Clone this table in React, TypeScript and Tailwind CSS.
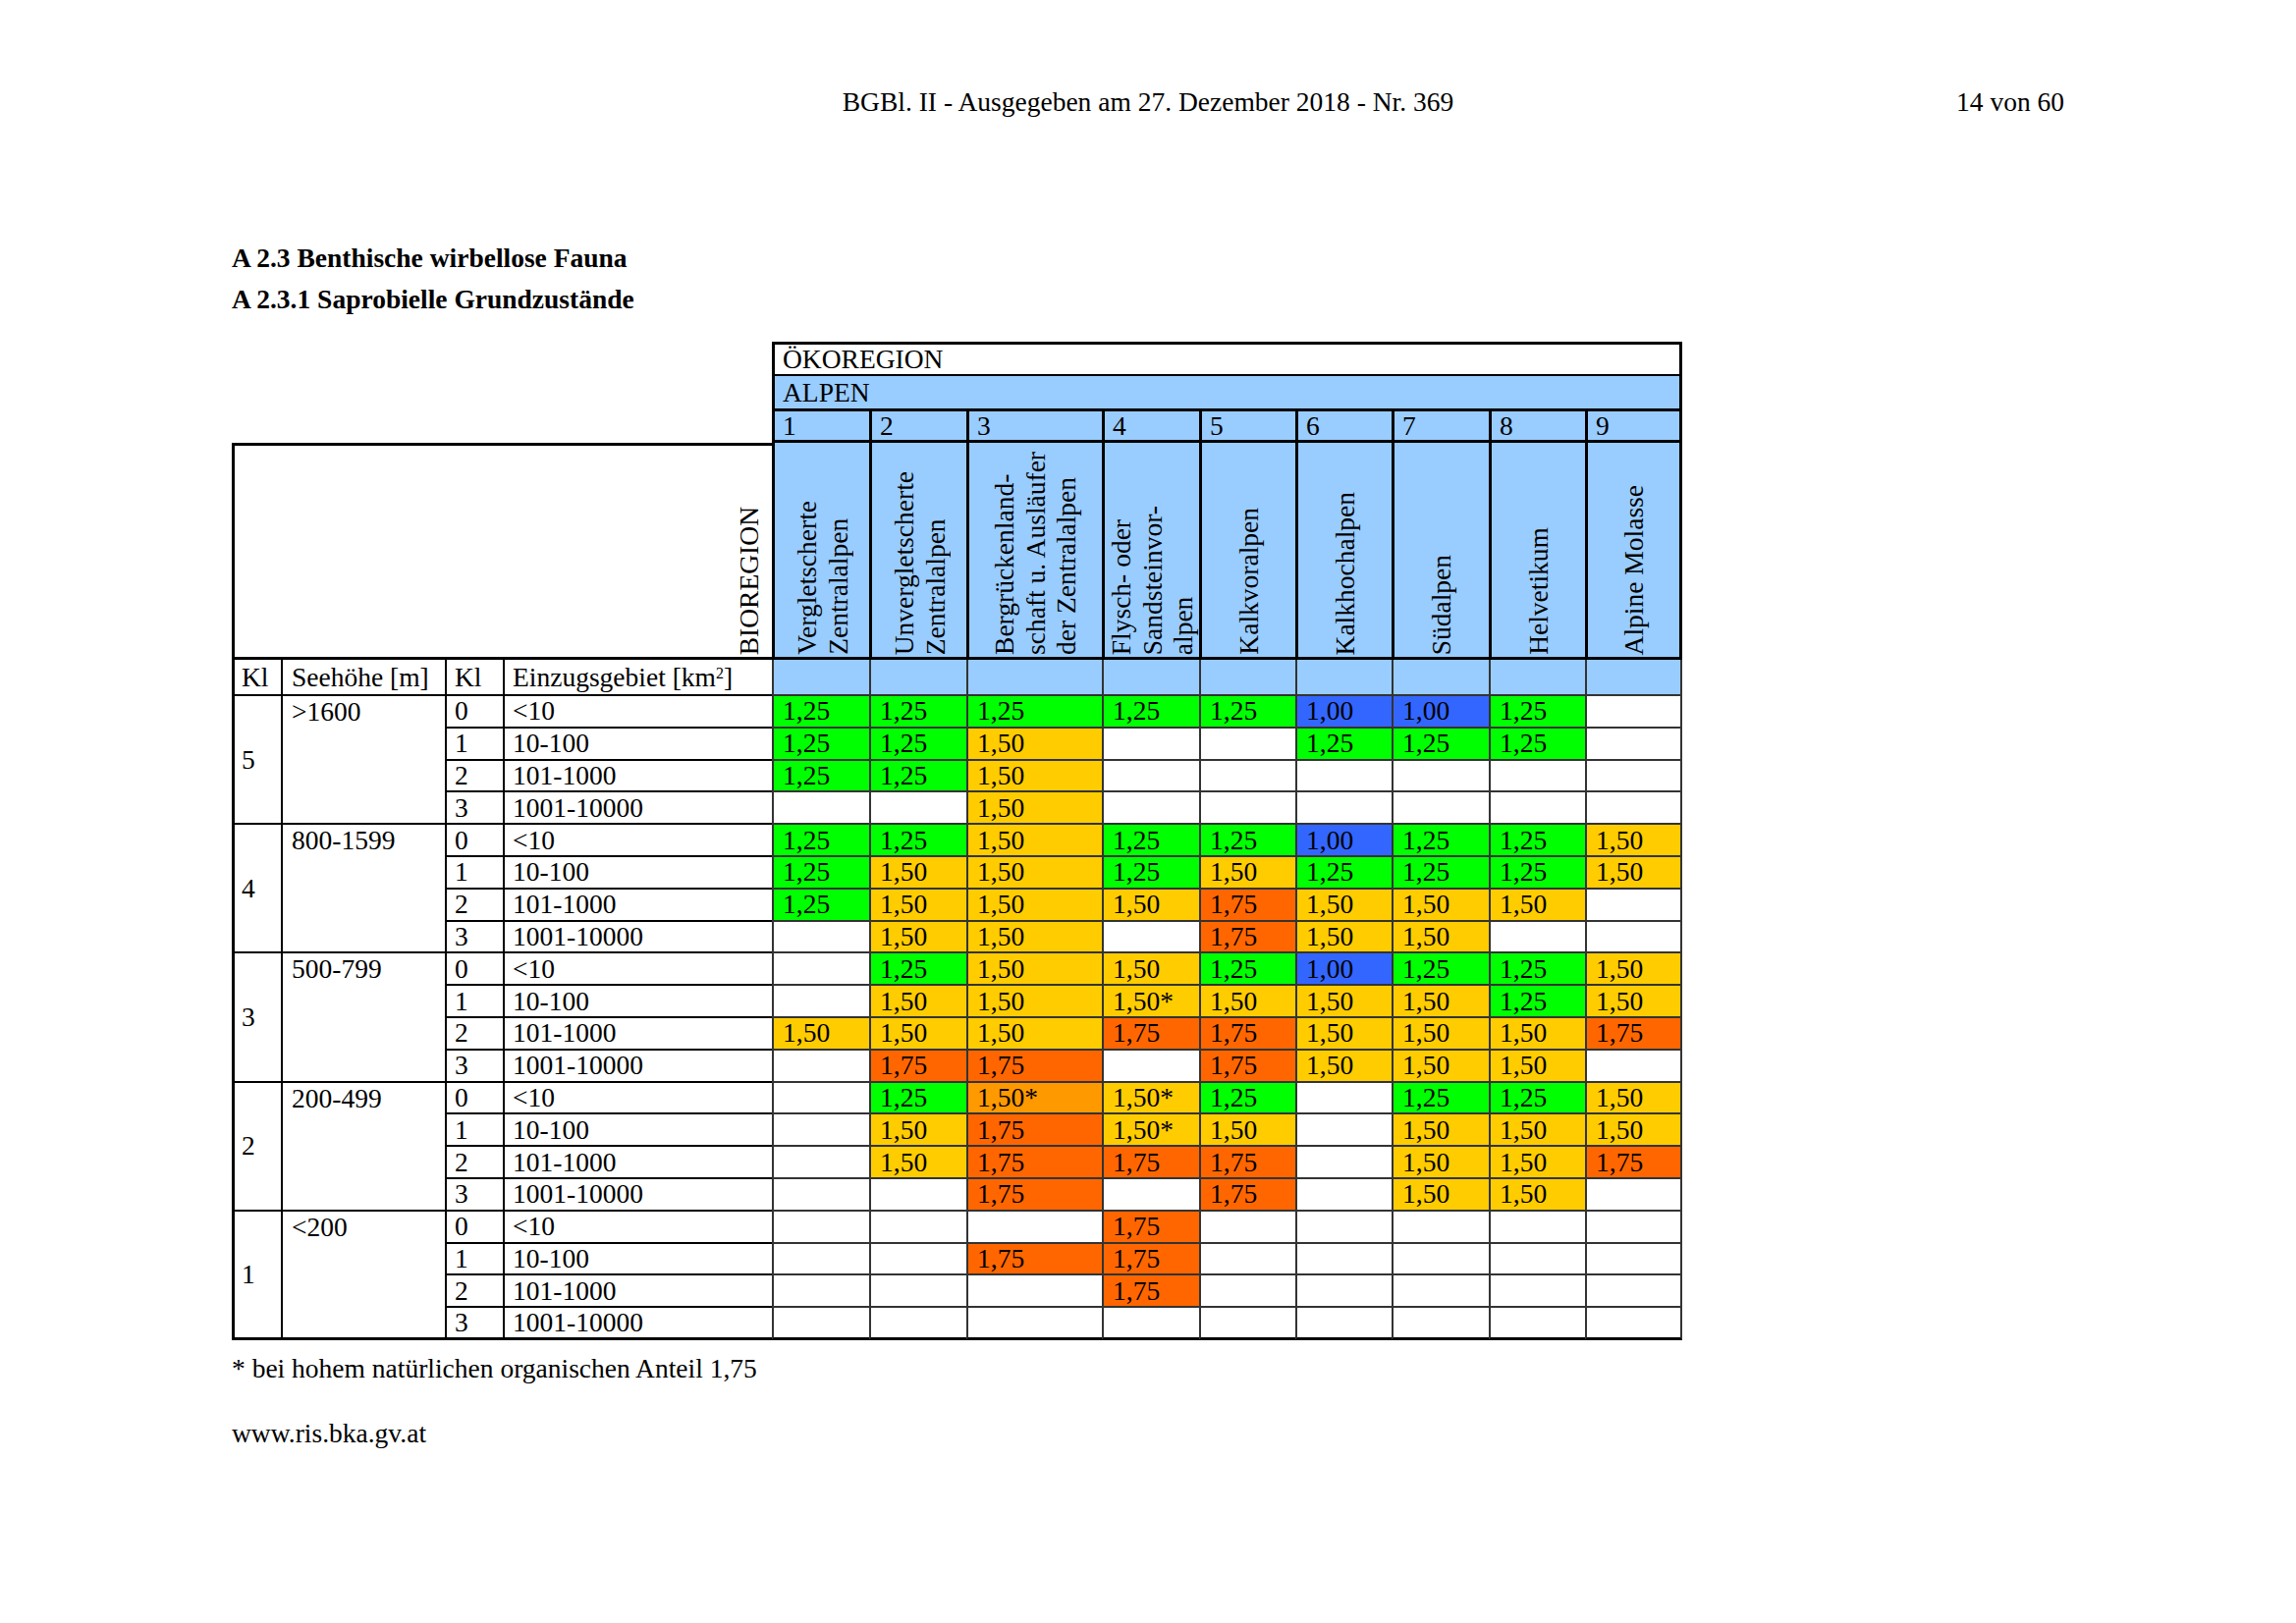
const serif = "font-['Liberation_Serif','Times_New_Roman',serif]";

// code letter -> [shown value, cell colour]
const values: Record<string, [string, string]> = {
  G: ['1,25', 'bg-[#00ff00]'],
  B: ['1,00', 'bg-[#3366ff]'],
  Y: ['1,50', 'bg-[#ffcc00]'],
  S: ['1,50*', 'bg-[#ffcc00]'],
  A: ['1,50*', 'bg-[#ff9900]'],
  O: ['1,75', 'bg-[#ff6600]'],
};

const groups = [
  { kl: '5', height: '>1600', rows: ['GGGGGBBG.', 'GGY..GGG.', 'GGY......', '..Y......'] },
  { kl: '4', height: '800-1599', rows: ['GGYGGBGGY', 'GYYGYGGGY', 'GYYYOYYY.', '.YY.OYY..'] },
  { kl: '3', height: '500-799', rows: ['.GYYGBGGY', '.YYSYYYGY', 'YYYOOYYYO', '.OO.OYYY.'] },
  { kl: '2', height: '200-499', rows: ['.GASG.GGY', '.YOSY.YYY', '.YOOO.YYO', '..O.O.YY.'] },
  { kl: '1', height: '<200', rows: ['...O.....', '..OO.....', '...O.....', '.........'] },
];

const areas = ['<10', '10-100', '101-1000', '1001-10000'];

const regions = [
  ['Vergletscherte', 'Zentralalpen'],
  ['Unvergletscherte', 'Zentralalpen'],
  ['Bergrückenland-', 'schaft u. Ausläufer', 'der Zentralalpen'],
  ['Flysch- oder', 'Sandsteinvor-', 'alpen'],
  ['Kalkvoralpen'],
  ['Kalkhochalpen'],
  ['Südalpen'],
  ['Helvetikum'],
  ['Alpine Molasse'],
];

function Vertical({ lines }: { lines: string[] }) {
  return (
    <div className="[writing-mode:vertical-rl] rotate-180 whitespace-nowrap leading-[31.5px]">
      {lines.map((l, i) => (
        <div key={i}>{l}</div>
      ))}
    </div>
  );
}

function GrundTable() {
  return (
    <div className="grid grid-cols-[50px_167px_59px_274px_99px_99px_138px_99px_98px_98px_99px_98px_99px] grid-rows-[35px_36px_32px_221px_37px_repeat(20,32.8px)] leading-[30px]">
      <div className="col-span-4 row-span-3" />
      <div className="col-span-9 flex items-center border-t-[3px] border-x-[3px] border-b-2 border-black bg-white pl-[8px]">
        ÖKOREGION
      </div>
      <div className="col-span-9 flex items-center border-x-[3px] border-b-[3px] border-black bg-[#99ccff] pl-[8px]">
        ALPEN
      </div>
      {regions.map((_, i) => (
        <div
          key={i}
          className={`flex items-center border-l-[3px] border-b-[3px] border-black bg-[#99ccff] pl-[8px] ${i === 8 ? 'border-r-[3px]' : ''}`}
        >
          {i + 1}
        </div>
      ))}

      <div className="col-span-4 flex items-end justify-end border-t-[3px] border-l-[3px] border-b-[3px] border-black pr-[8px] pb-[2px]">
        <Vertical lines={['BIOREGION']} />
      </div>
      {regions.map((lines, i) => (
        <div
          key={i}
          className={`flex items-end justify-center border-l-[3px] border-b-[3px] border-black bg-[#99ccff] pb-[2px] ${i === 8 ? 'border-r-[3px]' : ''}`}
        >
          <Vertical lines={lines} />
        </div>
      ))}

      <div className="flex items-center border-l-[3px] border-b-2 border-black pl-[7px]">Kl</div>
      <div className="flex items-center border-l-2 border-b-2 border-black pl-[9px]">Seehöhe [m]</div>
      <div className="flex items-center border-l-2 border-b-2 border-black pl-[8px]">Kl</div>
      <div className="flex items-center border-l-2 border-b-2 border-black pl-[8px]">
        <span>
          Einzugsgebiet [km<sup className="text-[16px]">2</sup>]
        </span>
      </div>
      {regions.map((_, i) => (
        <div
          key={i}
          className={`border-l-2 border-b-2 border-[#333] bg-[#99ccff] ${i === 8 ? 'border-r-2' : ''}`}
        />
      ))}

      {groups.map((g, gi) => {
        const last = gi === groups.length - 1;
        return [
          <div
            key={`kl${gi}`}
            className={`row-span-4 flex items-center border-l-[3px] border-black pl-[7px] ${last ? 'border-b-[3px]' : 'border-b-2'}`}
          >
            {g.kl}
          </div>,
          <div
            key={`h${gi}`}
            className={`row-span-4 border-l-2 border-black pl-[9px] pt-[1px] ${last ? 'border-b-[3px]' : 'border-b-2'}`}
          >
            {g.height}
          </div>,
          ...g.rows.flatMap((row, ri) => {
            const bottom = last && ri === 3;
            return [
              <div
                key={`k${gi}-${ri}`}
                className={`flex items-center border-l-2 border-black pl-[8px] ${bottom ? 'border-b-[3px]' : 'border-b-2'}`}
              >
                {ri}
              </div>,
              <div
                key={`a${gi}-${ri}`}
                className={`flex items-center border-l-2 border-black pl-[8px] ${bottom ? 'border-b-[3px]' : 'border-b-2'}`}
              >
                {areas[ri]}
              </div>,
              ...row.split('').map((code, ci) => {
                const v = values[code];
                return (
                  <div
                    key={`d${gi}-${ri}-${ci}`}
                    className={`flex items-center border-l-2 border-[#333] pl-[9px] ${v ? v[1] : 'bg-white'} ${ci === 8 ? 'border-r-2' : ''} ${bottom ? 'border-b-[3px] border-b-black' : 'border-b-2'}`}
                  >
                    {v ? v[0] : ''}
                  </div>
                );
              }),
            ];
          }),
        ];
      })}
    </div>
  );
}

export default function App() {
  return (
    <div className={`min-h-screen bg-white px-[236px] pt-[89px] text-[27.5px] leading-[30px] text-black ${serif}`}>
      <header className="grid grid-cols-[1fr_auto_1fr]">
        <div />
        <div className="whitespace-nowrap text-center">BGBl. II - Ausgegeben am 27. Dezember 2018 - Nr. 369</div>
        <div className="text-right">14 von 60</div>
      </header>

      <h1 className="mt-[129px] font-bold">A 2.3 Benthische wirbellose Fauna</h1>
      <h2 className="mt-[12px] font-bold">A 2.3.1 Saprobielle Grundzustände</h2>

      <div className="mt-[28px]">
        <GrundTable />
      </div>

      <p className="mt-[14px]">* bei hohem natürlichen organischen Anteil 1,75</p>
      <p className="mt-[36px]">www.ris.bka.gv.at</p>
    </div>
  );
}
